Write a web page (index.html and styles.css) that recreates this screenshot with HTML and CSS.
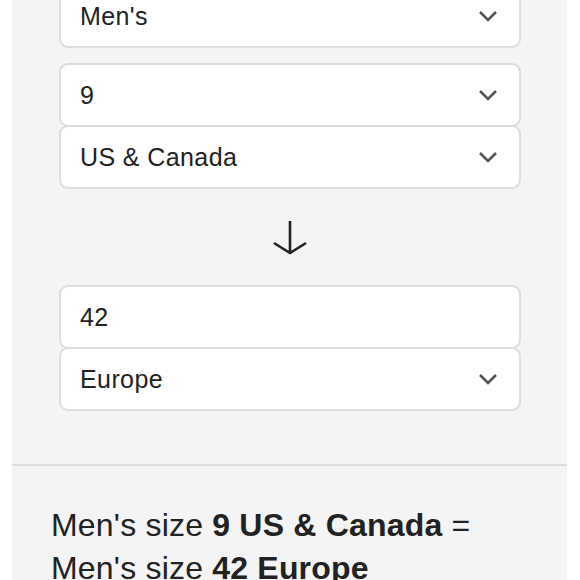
FILE: index.html
```html
<!DOCTYPE html>
<html>
<head>
<meta charset="utf-8">
<link rel="stylesheet" href="styles.css">
</head>
<body>
<div class="panel">
  <div class="form">
    <div class="field first">
      <span class="value">Men's</span>
      <svg class="chev" viewBox="0 0 20 12" width="20" height="12"><path d="M2 2 L10 10 L18 2" fill="none" stroke="#555" stroke-width="2.6"/></svg>
    </div>
    <div class="group">
      <div class="field">
        <span class="value">9</span>
        <svg class="chev" viewBox="0 0 20 12" width="20" height="12"><path d="M2 2 L10 10 L18 2" fill="none" stroke="#555" stroke-width="2.6"/></svg>
      </div>
      <div class="field stacked">
        <span class="value">US &amp; Canada</span>
        <svg class="chev" viewBox="0 0 20 12" width="20" height="12"><path d="M2 2 L10 10 L18 2" fill="none" stroke="#555" stroke-width="2.6"/></svg>
      </div>
    </div>
    <div class="arrow">
      <svg viewBox="0 0 36 36" width="36" height="36"><path d="M18 2 V33 M2 24 L18 34 L34 24" fill="none" stroke="#222" stroke-width="2.6"/></svg>
    </div>
    <div class="group">
      <div class="field">
        <span class="value">42</span>
      </div>
      <div class="field stacked">
        <span class="value">Europe</span>
        <svg class="chev" viewBox="0 0 20 12" width="20" height="12"><path d="M2 2 L10 10 L18 2" fill="none" stroke="#555" stroke-width="2.6"/></svg>
      </div>
    </div>
  </div>
  <div class="divider"></div>
  <p class="result">Men's size <b>9 US &amp; Canada</b> =<br>Men's size <b>42 Europe</b></p>
</div>
</body>
</html>
```
FILE: styles.css
```css
html, body {
  margin: 0;
  padding: 0;
  background: #ffffff;
  font-family: "Liberation Sans", Arial, sans-serif;
  color: #222222;
  overflow: hidden;
}
.panel {
  width: 555px;
  margin-left: 12px;
  background: #f4f4f4;
  height: 580px;
}
.form {
  padding: 0 46px 0 47px;
  display: flex;
  flex-direction: column;
}
.field {
  height: 64px;
  box-sizing: border-box;
  border: 2.5px solid #dddddd;
  border-radius: 9px;
  background: #ffffff;
  display: flex;
  align-items: center;
  justify-content: space-between;
  padding: 0 21px 0 19px;
  position: relative;
}
.field.first {
  margin-top: -16px;
  margin-bottom: 15px;
}
.field.stacked {
  margin-top: -2px;
}
.value {
  font-size: 25px;
  letter-spacing: 0.4px;
  color: #222222;
}
.chev {
  display: block;
}
.arrow {
  display: flex;
  justify-content: center;
  padding: 30px 0 30px;
}
.arrow svg {
  display: block;
}
.divider {
  height: 2px;
  background: #dddddd;
  margin-top: 53px;
}
.result {
  margin: 38px 0 0 39px;
  font-size: 32px;
  letter-spacing: 0.2px;
  line-height: 43px;
  color: #222222;
}
.result b {
  font-weight: 700;
}
```
